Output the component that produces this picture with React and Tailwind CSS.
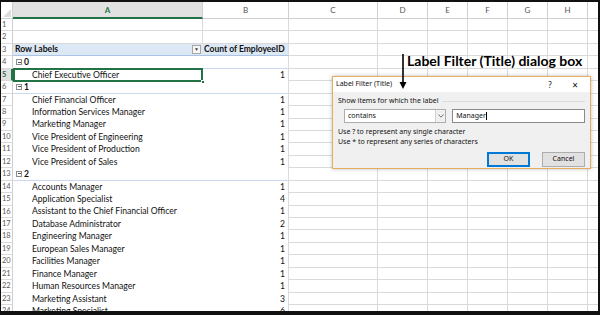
import React from "react";

const COLS = [
  { key: "A", w: "w-[190px]" },
  { key: "B", w: "w-[86px]" },
  { key: "C", w: "w-[89px]" },
  { key: "D", w: "w-[50px]" },
  { key: "E", w: "w-[40px]" },
  { key: "F", w: "w-[40px]" },
  { key: "G", w: "w-[40px]" },
  { key: "H", w: "w-[40px]" },
];

const rows = [
  { t: "empty" },
  { t: "empty" },
  { t: "header" },
  { t: "group", label: "0" },
  { t: "item", label: "Chief Executive Officer", v: "1", sel: true },
  { t: "group", label: "1" },
  { t: "item", label: "Chief Financial Officer", v: "1" },
  { t: "item", label: "Information Services Manager", v: "1" },
  { t: "item", label: "Marketing Manager", v: "1" },
  { t: "item", label: "Vice President of Engineering", v: "1" },
  { t: "item", label: "Vice President of Production", v: "1" },
  { t: "item", label: "Vice President of Sales", v: "1" },
  { t: "group", label: "2" },
  { t: "item", label: "Accounts Manager", v: "1" },
  { t: "item", label: "Application Specialist", v: "4" },
  { t: "item", label: "Assistant to the Chief Financial Officer", v: "1" },
  { t: "item", label: "Database Administrator", v: "2" },
  { t: "item", label: "Engineering Manager", v: "1" },
  { t: "item", label: "European Sales Manager", v: "1" },
  { t: "item", label: "Facilities Manager", v: "1" },
  { t: "item", label: "Finance Manager", v: "1" },
  { t: "item", label: "Human Resources Manager", v: "1" },
  { t: "item", label: "Marketing Assistant", v: "3" },
  { t: "item", label: "Marketing Specialist", v: "6" },
];

function Collapse() {
  return (
    <span className="inline-flex items-center justify-center w-[6px] h-[6px] border border-[#8c8c8c] mr-[2px] bg-white">
      <span className="block w-[3px] h-px bg-[#555]" />
    </span>
  );
}

function EmptyCells() {
  return (
    <>
      <div className="w-[89px] border-r border-b border-[#dadada] shrink-0" />
      <div className="w-[50px] border-r border-b border-[#dadada] shrink-0" />
      <div className="w-[40px] border-r border-b border-[#dadada] shrink-0" />
      <div className="w-[40px] border-r border-b border-[#dadada] shrink-0" />
      <div className="w-[40px] border-r border-b border-[#dadada] shrink-0" />
      <div className="w-[40px] border-r border-b border-[#dadada] shrink-0" />
      <div className="flex-1 border-b border-[#dadada]" />
    </>
  );
}

function SheetRow({ r, n }) {
  const numCls = r.sel
    ? "bg-[#e1e1e1] text-[#217346] font-bold border-r-2 border-r-[#217346]"
    : "bg-white text-[#5a5a5a] border-r border-r-[#cfcfcf]";
  let a = null;
  let b = null;
  if (r.t === "empty") {
    a = <div className="w-[190px] shrink-0 border-r border-b border-[#dadada]" />;
    b = <div className="w-[86px] shrink-0 border-r border-b border-[#dadada]" />;
  } else if (r.t === "header") {
    a = (
      <div className="w-[190px] shrink-0 bg-[#dde8f5] border-b border-[#a9c4e4] flex items-center pl-[2px] font-bold text-[#111]">
        <span className="flex-1">Row Labels</span>
        <span className="w-[9px] h-[9px] mr-[2px] border border-[#a6a6a6] bg-[#f7f7f7] flex items-center justify-center text-[5px] leading-none text-[#444]">
          ▼
        </span>
      </div>
    );
    b = (
      <div className="w-[86px] shrink-0 bg-[#dde8f5] border-b border-[#a9c4e4] border-r border-r-[#dadada] flex items-center pl-[1px] font-bold text-[#111] whitespace-nowrap overflow-hidden text-[8.5px]">
        Count of EmployeeID
      </div>
    );
  } else if (r.t === "group") {
    a = (
      <div className="w-[190px] shrink-0 border-b border-[#c9daf0] flex items-center pl-[3px] font-bold text-[#111]">
        <Collapse />
        {r.label}
      </div>
    );
    b = <div className="w-[86px] shrink-0 border-b border-[#c9daf0] border-r border-r-[#dadada]" />;
  } else {
    a = (
      <div className="relative w-[190px] shrink-0 flex items-center pl-[19px] text-[#111] whitespace-nowrap">
        {r.label}
        {r.sel && (
          <>
            <div className="absolute left-0 -top-px right-0 -bottom-px border-2 border-[#217346]" />
            <div className="absolute -right-[2px] -bottom-[3px] w-[4px] h-[4px] bg-[#217346] border border-white" />
          </>
        )}
      </div>
    );
    b = (
      <div className="w-[86px] shrink-0 border-r border-[#dadada] flex items-center justify-end pr-[3px] text-[#111]">
        {r.v}
      </div>
    );
  }
  return (
    <div className="flex h-[12.45px] shrink-0 leading-none">
      <div className={`w-[12px] shrink-0 border-b border-b-[#dadada] flex items-center pl-[1px] text-[7.5px] ${numCls}`}>
        {n}
      </div>
      {a}
      {b}
      <EmptyCells />
    </div>
  );
}

export default function App() {
  return (
    <div className="w-[600px] h-[315px] bg-[#111] pt-[2px] pl-[1px] pr-[2px] pb-[4px]">
      <div
        className="relative w-full h-full bg-white overflow-hidden text-[8.6px]"
        style={{ fontFamily: "Lato, 'Open Sans', sans-serif" }}
      >
        <div className="flex flex-col">
          {/* column header row */}
          <div className="flex h-[17px] shrink-0 text-[8px] text-[#555]">
            <div className="w-[12px] shrink-0 border-r border-b border-[#cfcfcf] relative bg-white">
              <svg className="absolute right-[1px] bottom-[1px]" width="8" height="8" viewBox="0 0 8 8">
                <polygon points="8,0 8,8 0,8" fill="#dcdcdc" />
              </svg>
            </div>
            {COLS.map((c) =>
              c.key === "A" ? (
                <div
                  key={c.key}
                  className={`${c.w} shrink-0 bg-[#e1e1e1] border-r border-[#cfcfcf] border-b-2 border-b-[#217346] flex items-center justify-center text-[#217346] font-bold`}
                >
                  {c.key}
                </div>
              ) : (
                <div
                  key={c.key}
                  className={`${c.w} shrink-0 bg-white border-r border-b border-[#cfcfcf] flex items-center justify-center`}
                >
                  {c.key}
                </div>
              )
            )}
            <div className="flex-1 bg-white border-b border-[#cfcfcf]" />
          </div>
          {rows.map((r, i) => (
            <SheetRow key={i} r={r} n={i + 1} />
          ))}
        </div>

        {/* annotation */}
        <div className="absolute left-[406px] top-[52px] text-[14px] font-bold text-black leading-none whitespace-nowrap"
          style={{ fontFamily: "Lato, 'Open Sans', sans-serif" }}>
          Label Filter (Title) dialog box
        </div>

        {/* dialog */}
        <div
          className="absolute left-[331px] top-[74px] w-[259px] h-[93px] border border-[#e5ad62] bg-[#f0f0f0] flex flex-col shadow-[0_0_4px_rgba(0,0,0,0.25)] text-[7px] text-[#111]"
          style={{ fontFamily: "'Noto Sans', 'Open Sans', sans-serif" }}
        >
          <div className="h-[15px] bg-white flex items-center pl-[3px] shrink-0">
            <span className="flex-1">Label Filter (Title)</span>
            <span className="w-[20px] text-center text-[8px]">?</span>
            <span className="w-[30px] text-center text-[10px] leading-none">×</span>
          </div>
          <div className="flex-1 flex flex-col px-[5px]">
            <div className="mt-[4px] flex items-center gap-[3px] h-[10px]">
              <span>Show items for which the label</span>
              <span className="flex-1 h-px bg-[#dcdcdc]" />
            </div>
            <div className="mt-[3px] flex gap-[6px] pl-[6px]">
              <div className="w-[103px] h-[14px] bg-white border border-[#adadad] flex">
                <span className="flex-1 pl-[3px] flex items-center">contains</span>
                <span className="w-[10px] border-l border-[#cfcfcf] bg-[#f0f0f0] flex items-center justify-center">
                  <svg width="6" height="4" viewBox="0 0 6 4">
                    <polyline points="0.5,0.5 3,3.2 5.5,0.5" fill="none" stroke="#555" strokeWidth="0.8" />
                  </svg>
                </span>
              </div>
              <div className="w-[134px] h-[14px] bg-white border border-[#8a8a8a] flex items-center pl-[3px]">
                Manager<span className="w-px h-[8px] bg-black" />
              </div>
            </div>
            <div className="mt-[4px] leading-[10px]">
              <div>Use ? to represent any single character</div>
              <div>Use * to represent any series of characters</div>
            </div>
            <div className="mt-[5px] flex justify-end gap-[12px]">
              <div className="w-[43px] h-[15px] border border-[#0078d7] bg-[#e1e1e1] flex items-center justify-center shadow-[inset_0_0_0_1px_#0078d7]">
                OK
              </div>
              <div className="w-[43px] h-[15px] border border-[#adadad] bg-[#e1e1e1] flex items-center justify-center">
                Cancel
              </div>
            </div>
          </div>
        </div>

        {/* arrow */}
        <svg className="absolute left-[397px] top-[52px]" width="10" height="36" viewBox="0 0 10 36">
          <line x1="5" y1="0" x2="5" y2="33" stroke="#000" strokeWidth="1.6" />
          <polygon points="1.5,28 8.5,28 5,35" fill="#000" />
        </svg>
      </div>
    </div>
  );
}
